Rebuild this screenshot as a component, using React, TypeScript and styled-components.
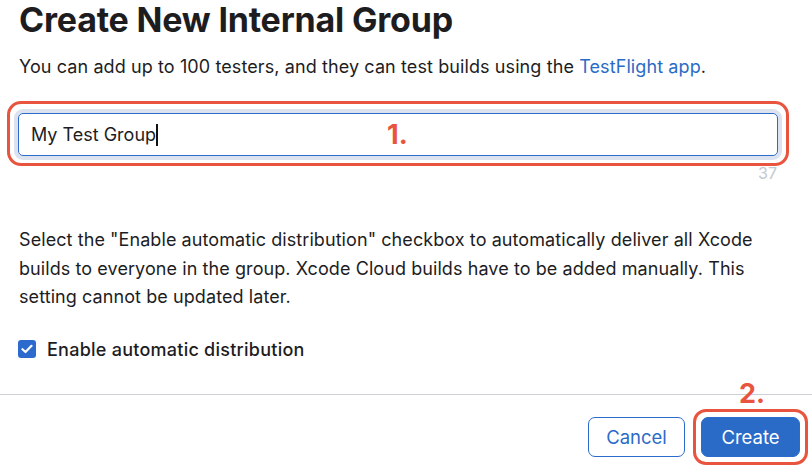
import React from "react";
import styled, { createGlobalStyle } from "styled-components";

const Global = createGlobalStyle`
  html, body { margin: 0; padding: 0; background: #ffffff; }
  body { font-family: Inter, "Noto Sans", "Liberation Sans", sans-serif; color: #1d1d1f; }
  * { box-sizing: border-box; }
`;

const Page = styled.div`
  width: 812px;
  height: 470px;
  display: flex;
  flex-direction: column;
  overflow: hidden;
`;

const Content = styled.div`
  padding: 0 34px 0 19px;
  display: flex;
  flex-direction: column;
`;

const Title = styled.h1`
  margin: 0;
  font-size: 34px;
  line-height: 40px;
  font-weight: 700;
  letter-spacing: -0.2px;
  color: #1d1d1f;
  white-space: nowrap;
`;

const Subtitle = styled.p`
  margin: 15px 0 0;
  font-size: 18px;
  line-height: 24px;
  letter-spacing: 0.1px;
  color: #1d1d1f;
  white-space: nowrap;
`;

const Link = styled.a`
  color: #2a6bc6;
  text-decoration: none;
`;

const FieldWrap = styled.div`
  position: relative;
  margin-top: 34px;
  margin-left: -1px;
`;

const Field = styled.div`
  height: 43px;
  border: 1px solid #2b6bcb;
  border-radius: 5px;
  box-shadow: 0 0 0 4px #dde3ee;
  display: flex;
  align-items: center;
  padding-left: 12px;
  font-size: 18px;
  color: #1d1d1f;
`;

const Caret = styled.span`
  display: inline-block;
  width: 2px;
  height: 22px;
  background: #111;
`;

const Annotation = styled.div<{ $left: number; $top: number }>`
  position: absolute;
  left: ${(p) => p.$left}px;
  top: ${(p) => p.$top}px;
  font-size: 27px;
  font-weight: 700;
  color: #e8543d;
  line-height: 1;
`;

const Highlight = styled.div<{ $inset: string; $radius: number }>`
  position: absolute;
  inset: ${(p) => p.$inset};
  border: 3px solid #e8543d;
  border-radius: ${(p) => p.$radius}px;
  pointer-events: none;
`;

const Counter = styled.div`
  align-self: flex-end;
  margin-top: 9px;
  margin-right: 1px;
  font-size: 16px;
  line-height: 16px;
  color: #c3c8d1;
`;

const Paragraph = styled.p`
  margin: 45px 0 0;
  font-size: 18px;
  line-height: 28.5px;
  letter-spacing: 0.08px;
  color: #1d1d1f;
  max-width: 746px;
`;

const CheckRow = styled.label`
  display: flex;
  align-items: center;
  gap: 11px;
  margin-top: 27px;
  font-size: 18px;
  font-weight: 500;
  letter-spacing: 0.25px;
  color: #1d1d1f;
`;

const Box = styled.span`
  width: 18px;
  height: 18px;
  border-radius: 3px;
  background: #2c6bcd;
  display: flex;
  align-items: center;
  justify-content: center;
  margin-left: -1px;
`;

const Footer = styled.div`
  position: relative;
  margin-top: auto;
  height: 76px;
  border-top: 1px solid #ccd1d8;
  display: flex;
  justify-content: flex-end;
  align-items: flex-start;
  gap: 16px;
  padding: 22px 12px 0 0;
`;

const Button = styled.button<{ $primary?: boolean; $width: number }>`
  width: ${(p) => p.$width}px;
  height: 40px;
  padding: 0;
  border-radius: 7px;
  font-family: inherit;
  font-size: 18.5px;
  font-weight: 400;
  border: 1px solid #2b6bcb;
  background: ${(p) => (p.$primary ? "#2b6bc8" : "#ffffff")};
  color: ${(p) => (p.$primary ? "#ffffff" : "#2b6bc8")};
  cursor: pointer;
`;

const ButtonSlot = styled.div`
  position: relative;
  display: flex;
`;

export default function App() {
  return (
    <Page>
      <Global />
      <Content>
        <Title>Create New Internal Group</Title>
        <Subtitle>
          You can add up to 100 testers, and they can test builds using the{" "}
          <Link href="#">TestFlight app</Link>.
        </Subtitle>
        <FieldWrap>
          <Field>
            My Test Group
            <Caret />
          </Field>
          <Annotation $left={369} $top={8}>1.</Annotation>
          <Highlight $inset="-12px -11px -10px -11px" $radius={14} />
        </FieldWrap>
        <Counter>37</Counter>
        <Paragraph>
          Select the "Enable automatic distribution" checkbox to automatically deliver all Xcode
          builds to everyone in the group. Xcode Cloud builds have to be added manually. This
          setting cannot be updated later.
        </Paragraph>
        <CheckRow>
          <Box>
            <svg width="12" height="10" viewBox="0 0 12 10">
              <path d="M1.5 5.2 L4.5 8 L10.5 1.8" fill="none" stroke="#fff" strokeWidth="2.2" strokeLinecap="round" strokeLinejoin="round" />
            </svg>
          </Box>
          Enable automatic distribution
        </CheckRow>
      </Content>
      <Footer>
        <Button $width={97}>Cancel</Button>
        <ButtonSlot>
          <Button $primary $width={99}>Create</Button>
          <Highlight $inset="-8px -8px -8px -8px" $radius={13} />
          <Annotation $left={38} $top={-37}>2.</Annotation>
        </ButtonSlot>
      </Footer>
    </Page>
  );
}
